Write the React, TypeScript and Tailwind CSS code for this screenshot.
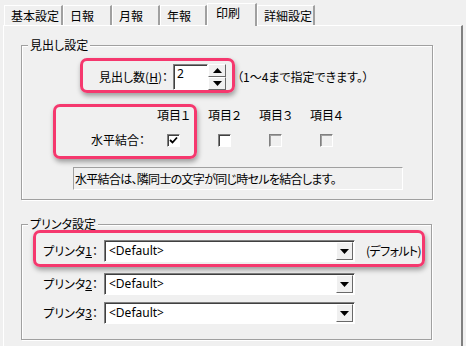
import React from "react";

const font = "font-['Noto_Sans_CJK_JP','Noto_Sans',sans-serif] [font-feature-settings:'palt'] text-[12px] text-black";

function Tab({ label, w, selected }: { label: string; w: number; selected?: boolean }) {
  if (selected) {
    return (
      <div
        className="relative z-10 mb-[-1px] h-[23px] flex items-start pt-[2px] pl-[8px] bg-[#f0f0f0] border-l border-t border-white border-r-2 border-r-[#a0a0a0] leading-[14px]"
        style={{ width: w }}
      >
        {label}
      </div>
    );
  }
  return (
    <div
      className="h-[20px] flex items-center pl-[6px] border-l border-t border-white border-r-2 border-r-[#a0a0a0] leading-[14px]"
      style={{ width: w }}
    >
      {label}
    </div>
  );
}

function Tri({ up }: { up?: boolean }) {
  return (
    <svg width="9" height="5" viewBox="0 0 9 5">
      {up ? <path d="M4.5 0 L9 5 L0 5 Z" fill="#000" /> : <path d="M0 0 L9 0 L4.5 5 Z" fill="#000" />}
    </svg>
  );
}

function Check({ checked, disabled }: { checked?: boolean; disabled?: boolean }) {
  return (
    <div
      className={`w-[13px] h-[13px] border border-t-[#808080] border-l-[#808080] border-b-white border-r-white flex items-center justify-center ${disabled ? "bg-[#f0f0f0] shadow-[inset_1px_1px_0_#a0a0a0]" : "bg-white shadow-[inset_1px_1px_0_#404040]"}`}
    >
      {checked && (
        <svg width="9" height="9" viewBox="0 0 9 9">
          <path d="M1 4 L3.5 6.5 L8 1.5" stroke="#000" strokeWidth="1.8" fill="none" />
        </svg>
      )}
    </div>
  );
}

function Combo({ h = 22 }: { h?: number }) {
  return (
    <div
      className="relative w-[251px] bg-white border border-t-[#808080] border-l-[#808080] border-b-white border-r-white shadow-[inset_1px_1px_0_#404040] flex items-center pl-[4px] leading-[14px]"
      style={{ height: h }}
    >
      <span className="font-['Noto_Sans','Liberation_Sans',sans-serif] text-[12px]">&lt;Default&gt;</span>
      <div className="absolute right-[1px] top-[1px] bottom-[1px] w-[17px] bg-[#f0f0f0] border border-t-white border-l-white border-b-[#696969] border-r-[#696969] flex items-center justify-center">
        <Tri />
      </div>
    </div>
  );
}

function Highlight({ l, t, w, h }: { l: number; t: number; w: number; h: number }) {
  return (
    <div
      className="absolute rounded-[7px] border-[3px] border-[#f5386e] shadow-[1px_3px_5px_rgba(0,0,0,0.35)] pointer-events-none"
      style={{ left: l, top: t, width: w, height: h }}
    />
  );
}

export default function App() {
  return (
    <div className={`relative w-[466px] h-[346px] bg-[#f0f0f0] overflow-hidden ${font}`}>
      {/* Tabs */}
      <div className="h-[25px] flex items-end pl-[4px]">
        <Tab label="基本設定" w={59} />
        <Tab label="日報" w={49} />
        <Tab label="月報" w={48} />
        <Tab label="年報" w={47} />
        <Tab label="印刷" w={50} selected />
        <Tab label="詳細設定" w={58} />
      </div>

      {/* Panel */}
      <div className="ml-[3px] w-[460px] h-[321px] border-t border-l border-white border-r-2 border-r-[#808080] flex flex-col">
        {/* Group 1 */}
        <div className="relative ml-[17px] mt-[19px] w-[412px] h-[155px] border border-[#a0a0a0] shadow-[inset_1px_1px_0_#fff,1px_1px_0_#fff] flex flex-col">
          <span className="absolute left-[6px] top-[-9px] px-[2px] bg-[#f0f0f0] leading-[16px]">見出し設定</span>

          <div className="mt-[18px] h-[26px] flex items-center">
            <div className="w-[146px] text-right leading-[14px]">
              見出し数(<span className="underline">H</span>)：
            </div>
            <div className="ml-[5px] w-[35px] h-[26px] bg-white border border-t-[#808080] border-l-[#808080] border-b-white border-r-white shadow-[inset_1px_1px_0_#404040] pl-[3px] pt-[2px] leading-[14px] font-['Noto_Sans','Liberation_Sans',sans-serif]">
              2
            </div>
            <div className="w-[18px] h-[26px] flex flex-col">
              <div className="h-[13px] bg-[#f0f0f0] border border-t-white border-l-white border-b-[#696969] border-r-[#696969] flex items-center justify-center">
                <Tri up />
              </div>
              <div className="h-[13px] bg-[#f0f0f0] border border-t-white border-l-white border-b-[#696969] border-r-[#696969] flex items-center justify-center">
                <Tri />
              </div>
            </div>
            <div className="ml-[11px] leading-[14px] whitespace-nowrap">（1～4まで指定できます。）</div>
          </div>

          <div className="mt-[18px] grid grid-cols-[126px_51px_51px_51px_51px] leading-[14px]">
            <div />
            <div className="text-center">項目１</div>
            <div className="text-center">項目２</div>
            <div className="text-center">項目３</div>
            <div className="text-center">項目４</div>
          </div>

          <div className="mt-[11px] grid grid-cols-[126px_51px_51px_51px_51px] items-center leading-[14px]">
            <div className="text-right pr-[3px]">水平結合：</div>
            <div className="flex justify-center"><Check checked /></div>
            <div className="flex justify-center"><Check /></div>
            <div className="flex justify-center"><Check disabled /></div>
            <div className="flex justify-center"><Check disabled /></div>
          </div>

          <div className="mt-[20px] ml-[51px] w-[330px] h-[23px] border border-t-[#a0a0a0] border-l-[#a0a0a0] border-b-white border-r-white flex items-center pl-[1px] leading-[14px] tracking-[-0.7px] whitespace-nowrap">
            水平結合は、隣同士の文字が同じ時セルを結合します。
          </div>
        </div>

        {/* Group 2 */}
        <div className="relative ml-[17px] mt-[24px] w-[411px] h-[116px] border border-[#a0a0a0] shadow-[inset_1px_1px_0_#fff,1px_1px_0_#fff] flex flex-col">
          <span className="absolute left-[6px] top-[-9px] px-[2px] bg-[#f0f0f0] leading-[16px]">プリンタ設定</span>

          <div className="mt-[15px] flex items-center">
            <div className="w-[76px] text-right leading-[14px]">
              プリンタ<span className="underline">1</span>：
            </div>
            <div className="ml-[6px] shrink-0"><Combo /></div>
            <div className="ml-[11px] leading-[14px] whitespace-nowrap tracking-[-0.6px]">(デフォルト)</div>
          </div>
          <div className="mt-[11px] flex items-center">
            <div className="w-[76px] text-right leading-[14px]">
              プリンタ<span className="underline">2</span>：
            </div>
            <div className="ml-[6px]"><Combo /></div>
          </div>
          <div className="mt-[7px] flex items-center">
            <div className="w-[76px] text-right leading-[14px]">
              プリンタ<span className="underline">3</span>：
            </div>
            <div className="ml-[6px]"><Combo /></div>
          </div>
        </div>
      </div>

      <Highlight l={80} t={58} w={155} h={35} />
      <Highlight l={53} t={104} w={144} h={55} />
      <Highlight l={33} t={230} w={392} h={37} />
    </div>
  );
}
